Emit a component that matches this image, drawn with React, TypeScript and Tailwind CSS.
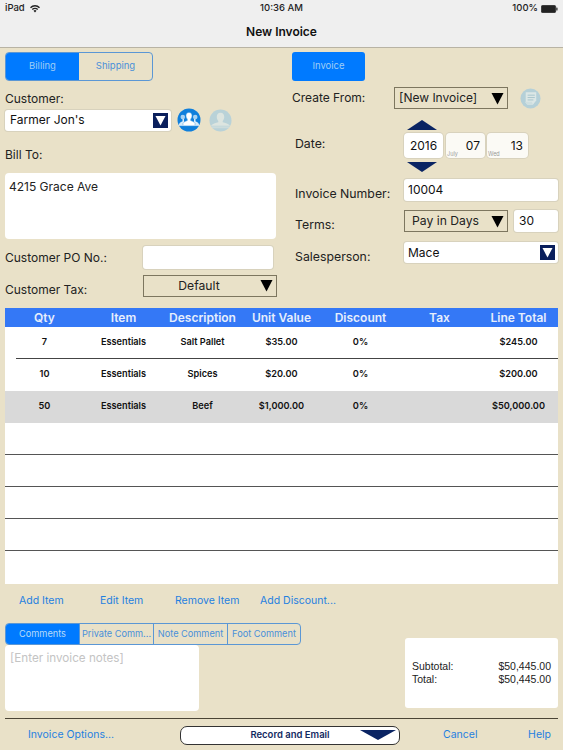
import React from "react";

const F = "font-['Inter','Noto_Sans',sans-serif]";

function BlueCaret() {
  return (
    <span className="flex h-[15px] w-[15px] items-center justify-center bg-[#0a1f5c]">
      <svg width="11" height="11" viewBox="0 0 11 11"><path d="M0.5 1H10.5L5.5 10.5Z" fill="#fff" /></svg>
    </span>
  );
}

function BlackCaret() {
  return <svg width="13" height="13" viewBox="0 0 13 13"><path d="M0.5 1H12.5L6.5 12.5Z" fill="#000" /></svg>;
}

function Tri({ up }: { up?: boolean }) {
  return (
    <svg width="30" height="10" viewBox="0 0 30 10" className="block">
      <path d={up ? "M15 0L30 10H0Z" : "M0 0H30L15 10Z"} fill="#0a2463" />
    </svg>
  );
}

function PeopleIcon() {
  return (
    <svg width="24" height="24" viewBox="0 0 24 24">
      <circle cx="12" cy="12" r="11.500" fill="#0f7fdc" />
      <circle cx="5.800" cy="9" r="2.300" fill="#a9d2f2" />
      <circle cx="18.200" cy="9" r="2.300" fill="#a9d2f2" />
      <path d="M1.800 17.500C1.800 15 3.500 14 5.500 13.200V11H7V15H17V11H18.500V13.200C20.500 14 22.200 15 22.200 17.500Z" fill="#d8ebf9" />
      <path d="M12 4.500c2.100 0 3 1.500 3 3.300 0 1.400-.6 2.600-1.300 3.300v1.500c1.600.6 3.500 1.300 4.300 2.600v2.300H6v-2.300c.8-1.300 2.700-2 4.300-2.600v-1.500C9.600 10.400 9 9.200 9 7.800c0-1.800.9-3.300 3-3.300Z" fill="#fff" stroke="#4a9fe4" strokeWidth="0.500" />
      <path d="M1.500 17.600H22.500" stroke="#fff" strokeWidth="0.500" />
    </svg>
  );
}

function PersonIcon() {
  return (
    <svg width="23" height="23" viewBox="0 0 24 24">
      <circle cx="12" cy="12" r="11.500" fill="#b9d2d8" />
      <path d="M12 4c2.700 0 3.900 2 3.900 4.300 0 1.800-.8 3.200-1.600 4.100v1.300c2.600.8 6.300 1.700 7.700 3.800H2c1.400-2.100 5.100-3 7.700-3.800v-1.300c-.8-.9-1.600-2.300-1.600-4.100C8.100 6 9.300 4 12 4Z" fill="#dde5e0" />
      <path d="M2.200 18h19.600l-1.200 2H3.400Z" fill="#cddcdc" />
    </svg>
  );
}

function DocIcon() {
  return (
    <svg width="21" height="21" viewBox="0 0 22 22">
      <circle cx="11" cy="11" r="10.500" fill="#b5d0d8" />
      <path d="M6 4.500H17V13L13.500 17.500H8L6 15.500Z" fill="#dce7e6" />
      <path d="M8 7.500H15.500M8 10H15.500M8 12.500H14" stroke="#a7c4cc" strokeWidth="1" />
      <path d="M5 14.500H12.500L13.500 17.500H7.500Z" fill="#cfdfe0" />
    </svg>
  );
}

const rows = [
  ["7", "Essentials", "Salt Pallet", "$35.00", "0%", "", "$245.00"],
  ["10", "Essentials", "Spices", "$20.00", "0%", "", "$200.00"],
  ["50", "Essentials", "Beef", "$1,000.00", "0%", "", "$50,000.00"],
  [], [], [], [], [],
];

const colClass = "grid grid-cols-7";

export default function App() {
  return (
    <div className={`flex h-[750px] w-[563px] flex-col overflow-hidden bg-[#e9e1c8] ${F} text-[#111]`}>
      {/* Status + nav */}
      <header className="h-[48px] shrink-0 border-b border-[#b8b3a4] bg-[#efefef]">
        <div className="flex h-[17px] items-center justify-between px-[5px] text-[9.500px] font-medium text-[#222]">
          <div className="flex w-[100px] items-center gap-[5px]">
            <span>iPad</span>
            <svg width="10" height="8" viewBox="0 0 10 8"><path d="M5 7.500L3.500 5.800a2.200 2.200 0 013 0ZM2.700 5L1.800 4a4.600 4.600 0 016.400 0l-.9 1a3.300 3.300 0 00-4.600 0ZM1 3.200L0 2.200a7 7 0 0110 0L9 3.200a5.700 5.700 0 00-8 0Z" fill="#222" /></svg>
          </div>
          <span>10:36 AM</span>
          <div className="flex w-[100px] items-center justify-end gap-[3px]">
            <span>100%</span>
            <svg width="17" height="8" viewBox="0 0 17 8"><rect x="0.300" y="0.300" width="14.400" height="7.400" rx="1.500" fill="#222" stroke="#222" strokeWidth="0.600" /><rect x="15.300" y="2.500" width="1.200" height="3" rx="0.500" fill="#222" /></svg>
          </div>
        </div>
        <div className="flex h-[30px] items-center justify-center text-[12px] font-semibold text-[#111]">New Invoice</div>
      </header>

      {/* Form */}
      <div className="flex h-[260px] shrink-0 pl-[5px] pr-[5px] pt-[4px]">
        <div className="w-[272px] shrink-0">
          <div className="flex h-[29px] w-[148px] overflow-hidden rounded-[4px] border border-[#5b97d5] text-[9.500px]">
            <div className="flex w-[73px] items-center justify-center bg-[#007aff] text-[#9fcdf5]">Billing</div>
            <div className="flex flex-1 items-center justify-center text-[#4a90d9]">Shipping</div>
          </div>
          <div className="mt-[9px] h-[18px] text-[12px] leading-[18px] text-[#222]">Customer:</div>
          <div className="flex h-[24px] items-center">
            <div className="flex h-[21px] w-[166px] items-center justify-between rounded-[3px] bg-white pl-[5px] pr-[3px] text-[12px] shadow-[0_0_0_1px_#d8d2bd]">
              <span>Farmer Jon's</span>
              <BlueCaret />
            </div>
            <div className="ml-[6px] flex items-center gap-[8px]">
              <PeopleIcon />
              <PersonIcon />
            </div>
          </div>
          <div className="mt-[14px] h-[18px] text-[12px] leading-[18px] text-[#222]">Bill To:</div>
          <div className="mt-[9px] h-[66px] w-[271px] rounded-[4px] bg-white px-[4px] pt-[5px] text-[12px] leading-[18px] text-[#222]">4215 Grace Ave</div>
          <div className="mt-[7px] flex items-center">
            <span className="w-[138px] text-[12px] text-[#222]">Customer PO No.:</span>
            <div className="h-[23px] w-[130px] rounded-[3px] bg-white shadow-[0_0_0_1px_#d8d2bd]" />
          </div>
          <div className="mt-[6px] flex items-start">
            <span className="w-[138px] pt-[7px] text-[12px] leading-[16px] text-[#222]">Customer Tax:</span>
            <div className="relative flex h-[22px] w-[134px] items-center justify-center border border-[#7d765f] pr-[22px] text-[12.200px] text-[#222]">
              <span className="pt-[1px]">Default</span>
              <span className="absolute right-[3px] top-[3px]"><BlackCaret /></span>
            </div>
          </div>
        </div>

        <div className="ml-[15px] w-[266px] shrink-0">
          <div className="flex h-[29px] w-[73px] items-center justify-center rounded-[3px] bg-[#007aff] text-[9.500px] text-[#9fcdf5]">Invoice</div>
          <div className="mt-[6px] flex h-[22px] items-center">
            <span className="w-[102px] text-[12px] text-[#222]">Create From:</span>
            <div className="flex h-[22px] w-[114px] items-center justify-between border border-[#7d765f] pl-[4px] pr-[3px] text-[12px] text-[#222]">
              <span>[New Invoice]</span><BlackCaret />
            </div>
            <span className="ml-[12px] flex"><DocIcon /></span>
          </div>
          <div className="mt-[11px] flex">
            <span className="w-[112px] pl-[3px] pt-[15px] text-[12.300px] text-[#222]">Date:</span>
            <div className="flex flex-col">
              <div className="ml-[3px] h-[13px]"><Tri up /></div>
              <div className="flex gap-[3px]">
                <div className="flex h-[25px] w-[39px] items-center justify-center rounded-[4px] bg-white text-[12px] shadow-[0_0_0_1px_#d8d2bd]">2016</div>
                <div className="relative flex h-[25px] w-[39px] items-center justify-end rounded-[4px] bg-[#fbfaf5] pr-[5px] text-[12px] shadow-[0_0_0_1px_#d8d2bd]">
                  07
                  <span className="absolute bottom-[1px] left-[1px] text-[5.500px] leading-none text-[#9a9a9a]">July</span>
                </div>
                <div className="relative -ml-[1px] flex h-[25px] w-[41px] items-center justify-end rounded-[4px] bg-[#fbfaf5] pr-[5px] text-[12px] shadow-[0_0_0_1px_#d8d2bd]">
                  13
                  <span className="absolute bottom-[1px] left-[1px] text-[5.500px] leading-none text-[#9a9a9a]">Wed</span>
                </div>
              </div>
              <div className="ml-[3px] mt-[4px] h-[10px]"><Tri /></div>
            </div>
          </div>
          <div className="mt-[7px] flex items-start">
            <span className="w-[112px] pl-[3px] pt-[7px] text-[12.300px] leading-[16px] text-[#222]">Invoice Number:</span>
            <div className="flex h-[22px] w-[154px] items-center rounded-[3px] bg-white pl-[4px] text-[12px] shadow-[0_0_0_1px_#d8d2bd]">10004</div>
          </div>
          <div className="mt-[8px] flex items-start">
            <span className="w-[112px] pl-[3px] pt-[7px] text-[12.300px] leading-[16px] text-[#222]">Terms:</span>
            <div className="flex h-[22px] w-[104px] items-center justify-between border border-[#7d765f] pl-[7px] pr-[3px] text-[12.200px] text-[#222]">
              <span>Pay in Days</span><BlackCaret />
            </div>
            <div className="ml-[6px] flex h-[22px] w-[44px] items-center rounded-[3px] bg-white pl-[5px] text-[12px] shadow-[0_0_0_1px_#d8d2bd]">30</div>
          </div>
          <div className="mt-[9px] flex items-start">
            <span className="w-[112px] pl-[3px] pt-[7px] text-[12.300px] leading-[16px] text-[#222]">Salesperson:</span>
            <div className="flex h-[21px] w-[154px] items-center justify-between rounded-[3px] bg-white pl-[4px] pr-[3px] text-[12px] shadow-[0_0_0_1px_#d8d2bd]">
              <span>Mace</span><BlueCaret />
            </div>
          </div>
        </div>
      </div>

      {/* Table */}
      <div className="mx-[5px] w-[553px] shrink-0">
        <div className={`${colClass} h-[19px] items-center bg-[#3478f6] text-center text-[12px] font-semibold text-[#e6eefc]`}>
          {["Qty", "Item", "Description", "Unit Value", "Discount", "Tax", "Line Total"].map((h) => (
            <span key={h}>{h}</span>
          ))}
        </div>
        {rows.map((r, i) => (
          <div key={i} className={`${i === 2 ? "bg-[#d9d9d9]" : "bg-white"}`}>
            <div
              className={`${colClass} ${i === 7 ? "h-[33px]" : "h-[31px]"} items-center pb-[1px] text-center text-[9.200px] font-semibold text-[#111]`}
            >
              {r.map((c, j) => (
                <span key={j}>{c}</span>
              ))}
            </div>
            {i !== 7 && (
              <div
                className={`h-px ${i === 0 ? "ml-[11px] bg-[#444]" : i === 1 || i === 2 ? "bg-transparent" : "bg-[#555]"}`}
              />
            )}
          </div>
        ))}
      </div>

      {/* Actions */}
      <div className="flex h-[32px] shrink-0 items-center pl-[19px] pt-[1px] text-[10.500px] text-[#1f7fe0]">
        <span className="w-[81px]">Add Item</span>
        <span className="w-[75px]">Edit Item</span>
        <span className="w-[85px]">Remove Item</span>
        <span>Add Discount...</span>
      </div>

      {/* Comments & totals */}
      <div className="mx-[5px] flex h-[102px] shrink-0 justify-between pt-[7px]">
        <div>
          <div className="flex h-[22px] w-[296px] overflow-hidden rounded-[4px] border border-[#5b97d5] text-[9.200px] text-[#4a90d9]">
            <div className="flex w-[73px] items-center justify-center bg-[#007aff] text-[#b8dbf8]">Comments</div>
            <div className="flex w-[74px] items-center justify-center border-l border-[#5b97d5] whitespace-nowrap">Private Comm...</div>
            <div className="flex w-[74px] items-center justify-center border-l border-[#5b97d5] whitespace-nowrap">Note Comment</div>
            <div className="flex flex-1 items-center justify-center border-l border-[#5b97d5] whitespace-nowrap">Foot Comment</div>
          </div>
          <div className="h-[66px] w-[194px] rounded-[4px] bg-white px-[5px] pt-[4px] text-[11.700px] leading-[18px] text-[#c4c4c4]">[Enter invoice notes]</div>
        </div>
        <div className="mt-[15px] flex h-[70px] w-[153px] flex-col justify-center rounded-[3px] bg-white px-[7px] pb-[1px] font-['Liberation_Sans',sans-serif] text-[10.500px] leading-[12.500px] text-[#222]">
          <div className="flex justify-between"><span>Subtotal:</span><span>$50,445.00</span></div>
          <div className="flex justify-between"><span>Total:</span><span>$50,445.00</span></div>
        </div>
      </div>

      {/* Footer */}
      <div className="mx-[5px] flex h-[32px] shrink-0 items-center border-t border-[#4a4435] pt-[1px] text-[10.500px] text-[#1f7fe0]">
        <span className="ml-[23px] w-[152px]">Invoice Options...</span>
        <div className="relative flex h-[19px] w-[220px] items-center justify-center rounded-[7px] border border-[#333] bg-white text-[9.500px] font-semibold text-[#12295f]">
          Record and Email
          <svg width="36" height="10" viewBox="0 0 36 10" className="absolute right-[3px] top-[3px]"><path d="M0 0H36L18 10Z" fill="#0a2463" /></svg>
        </div>
        <span className="ml-[43px]">Cancel</span>
        <span className="ml-auto mr-[7px]">Help</span>
      </div>
    </div>
  );
}
